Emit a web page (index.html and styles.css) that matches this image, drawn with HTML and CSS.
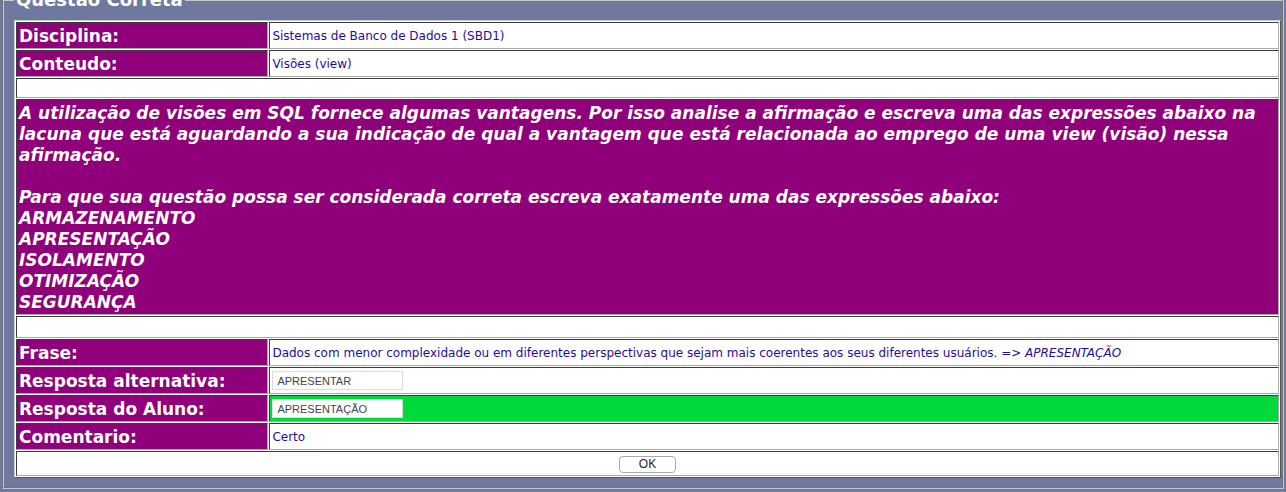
FILE: index.html
```html
<!DOCTYPE html>
<html lang="pt">
<head>
<meta charset="utf-8">
<title>Questão Correta</title>
<link rel="stylesheet" href="styles.css">
</head>
<body>
<fieldset class="box">
  <legend class="box-title">Questão Correta</legend>
  <table class="qtable">
    <tr>
      <td class="label">Disciplina:</td>
      <td class="value">Sistemas de Banco de Dados 1 (SBD1)</td>
    </tr>
    <tr>
      <td class="label">Conteudo:</td>
      <td class="value">Visões (view)</td>
    </tr>
    <tr>
      <td class="blank" colspan="2"></td>
    </tr>
    <tr>
      <td class="question" colspan="2">A utilização de visões em SQL fornece algumas vantagens. Por isso analise a afirmação e escreva uma das expressões abaixo na lacuna que está aguardando a sua indicação de qual a vantagem que está relacionada ao emprego de uma view (visão) nessa afirmação.<br><br>Para que sua questão possa ser considerada correta escreva exatamente uma das expressões abaixo:<br>ARMAZENAMENTO<br>APRESENTAÇÃO<br>ISOLAMENTO<br>OTIMIZAÇÃO<br>SEGURANÇA</td>
    </tr>
    <tr>
      <td class="blank blank-2" colspan="2"></td>
    </tr>
    <tr>
      <td class="label">Frase:</td>
      <td class="value">Dados com menor complexidade ou em diferentes perspectivas que sejam mais coerentes aos seus diferentes usuários. =&gt; <i>APRESENTAÇÃO</i></td>
    </tr>
    <tr>
      <td class="label">Resposta alternativa:</td>
      <td class="value"><input class="field" type="text" value="APRESENTAR" readonly></td>
    </tr>
    <tr>
      <td class="label">Resposta do Aluno:</td>
      <td class="value ok"><input class="field" type="text" value="APRESENTAÇÃO" readonly></td>
    </tr>
    <tr>
      <td class="label">Comentario:</td>
      <td class="value">Certo</td>
    </tr>
    <tr>
      <td class="actions" colspan="2"><button class="btn" type="button">OK</button></td>
    </tr>
  </table>
</fieldset>
</body>
</html>
```
FILE: styles.css
```css
html, body {
  margin: 0;
  padding: 0;
  background: #6f789f;
  font-family: "DejaVu Sans", Verdana, sans-serif;
  overflow: hidden;
}

.box {
  margin: -12px 2px 0 2px;
  padding: 9px 4px 9px 10px;
  border: 2px groove #c8c8c8;
  min-width: 0;
}

.box-title {
  color: #ffffff;
  font-weight: bold;
  font-size: 18px;
  padding: 0 2px;
  margin-left: 0;
  line-height: 23px;
}

.qtable {
  width: 1267px;
  border: 1px solid;
  border-color: #cfcfcf #555 #555 #cfcfcf;
  border-spacing: 1px;
  background: #ffffff;
}

.qtable td {
  border: 1px solid;
  border-color: #3c3c3c #a8a8a8 #a8a8a8 #3c3c3c;
  padding: 0 2px;
}

.label {
  width: 20%;
  height: 27px;
  box-sizing: border-box;
  background: #8f007a;
  color: #ffffff;
  font-weight: bold;
  font-size: 17px;
}

.value {
  background: #ffffff;
  color: #1f0c9c;
  font-size: 12px;
}

.value.ok {
  background: #00d93c;
}

.blank {
  height: 18px;
  background: #ffffff;
}

.blank-2 {
  height: 20px;
}

.question {
  background: #8f007a;
  color: #ffffff;
  font-weight: bold;
  font-style: italic;
  font-size: 17px;
  line-height: 21px;
  padding: 3px 2px 1px 2px !important;
}

.field {
  width: 131px;
  height: 19px;
  box-sizing: border-box;
  border: 1px solid #dcdcdc;
  background: #ffffff;
  color: #444;
  font-family: "Liberation Sans", Arial, sans-serif;
  font-size: 11px;
  padding: 0 4px;
  margin: 0;
  vertical-align: middle;
}

.actions {
  height: 23px;
  text-align: center;
  background: #ffffff;
}

.btn {
  width: 57px;
  height: 17px;
  padding: 0;
  border: 1px solid #aaaaaa;
  border-radius: 4px;
  background: #ffffff;
  color: #222;
  font-family: "Liberation Sans", Arial, sans-serif;
  font-size: 12px;
  line-height: 15px;
  vertical-align: middle;
}
```
